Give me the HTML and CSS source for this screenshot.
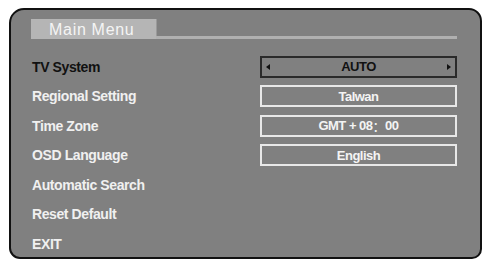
FILE: index.html
```html
<!DOCTYPE html>
<html lang="en">
<head>
    <meta charset="UTF-8">
    <title>Main Menu</title>
    <link rel="stylesheet" href="styles.css">
</head>
<body>
    <div class="osd">
        <div class="osd-head">
            <div class="tab">Main Menu</div>
            <div class="rule"></div>
        </div>

        <div class="menu">
            <div class="row active">
                <span class="label">TV System</span>
                <div class="field select">
                    <span class="arrow left"></span>
                    <span>AUTO</span>
                    <span class="arrow right"></span>
                </div>
            </div>
            <div class="row">
                <span class="label">Regional Setting</span>
                <div class="field">Talwan</div>
            </div>
            <div class="row">
                <span class="label">Time Zone</span>
                <div class="field">GMT + 08<span class="colon">：</span>00</div>
            </div>
            <div class="row">
                <span class="label">OSD Language</span>
                <div class="field">English</div>
            </div>
            <div class="row">
                <span class="label">Automatic Search</span>
            </div>
            <div class="row">
                <span class="label">Reset Default</span>
            </div>
            <div class="row">
                <span class="label">EXIT</span>
            </div>
        </div>
    </div>
</body>
</html>
```

FILE: styles.css
```css
body {
    margin: 0;
    background-color: #fff;
    font-family: "Liberation Sans", Arial, sans-serif;
}

.osd {
    box-sizing: border-box;
    width: 473px;
    height: 251px;
    margin: 8px 0 0 9px;
    padding: 9px 23px 0 20px;
    background-color: #808080;
    border: 2px solid #111;
    border-radius: 15px 13px 10px 11px;
    display: flex;
    flex-direction: column;
}

.osd-head {
    display: flex;
    align-items: flex-end;
}

.tab {
    box-sizing: border-box;
    width: 125px;
    height: 20px;
    padding-left: 18px;
    background-color: #b5b5b5;
    color: #f4f4f4;
    font-size: 16px;
    line-height: 21px;
    letter-spacing: 0.7px;
    box-shadow: 1px 0 0 #9a9a9a;
}

.rule {
    flex: 1;
    height: 3px;
    background-color: #b0b0b0;
}

.menu {
    display: grid;
    grid-auto-rows: 29.5px;
    padding-top: 13px;
}

.row {
    display: grid;
    grid-template-columns: 1fr 197px;
    align-items: center;
}

.label {
    padding-left: 1px;
    color: #f0f0f0;
    font-size: 14px;
    font-weight: bold;
    letter-spacing: -0.4px;
}

.row.active .label {
    color: #111;
}

.field {
    box-sizing: border-box;
    height: 22px;
    border: 2px solid #e8e8e8;
    color: #f4f4f4;
    font-size: 13px;
    font-weight: bold;
    letter-spacing: -0.5px;
    display: flex;
    align-items: center;
    justify-content: center;
}

.colon {
    font-family: "Noto Sans CJK SC", sans-serif;
    font-weight: normal;
}

.field.select {
    justify-content: space-between;
    padding: 0 4px;
    border-color: #2a2a2a;
    color: #111;
}

.arrow {
    width: 0;
    height: 0;
    border-top: 3px solid transparent;
    border-bottom: 3px solid transparent;
}

.arrow.left {
    border-right: 4px solid #111;
}

.arrow.right {
    border-left: 4px solid #111;
}
```
